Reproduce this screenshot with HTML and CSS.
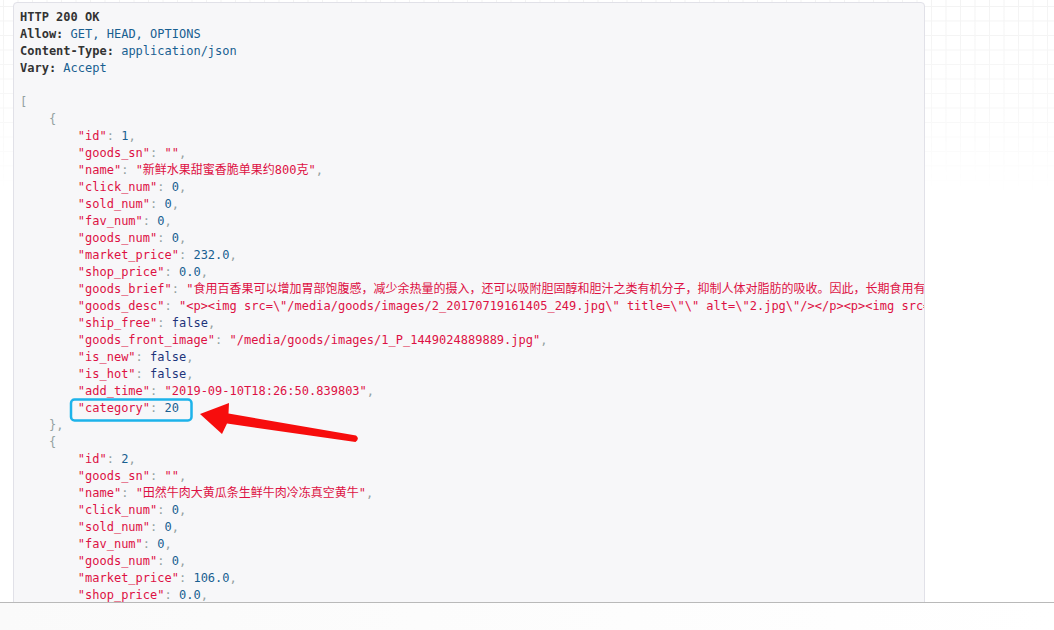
FILE: index.html
```html
<!DOCTYPE html>
<html lang="zh-CN">
<head>
<meta charset="utf-8">
<title>Goods List</title>
<link rel="stylesheet" href="styles.css">
</head>
<body>
<div class="page">
<div class="grid-bg"></div>
<pre class="response"><span class="meta"><b>HTTP 200 OK</b>
<b>Allow:</b> <span class="lit">GET, HEAD, OPTIONS</span>
<b>Content-Type:</b> <span class="lit">application/json</span>
<b>Vary:</b> <span class="lit">Accept</span></span>

<span class="pun">[</span>
    <span class="pun">{</span>
        <span class="str">"id"</span><span class="pun">:</span> <span class="lit">1</span><span class="pun">,</span>
        <span class="str">"goods_sn"</span><span class="pun">:</span> <span class="str">""</span><span class="pun">,</span>
        <span class="str">"name"</span><span class="pun">:</span> <span class="str">"新鲜水果甜蜜香脆单果约800克"</span><span class="pun">,</span>
        <span class="str">"click_num"</span><span class="pun">:</span> <span class="lit">0</span><span class="pun">,</span>
        <span class="str">"sold_num"</span><span class="pun">:</span> <span class="lit">0</span><span class="pun">,</span>
        <span class="str">"fav_num"</span><span class="pun">:</span> <span class="lit">0</span><span class="pun">,</span>
        <span class="str">"goods_num"</span><span class="pun">:</span> <span class="lit">0</span><span class="pun">,</span>
        <span class="str">"market_price"</span><span class="pun">:</span> <span class="lit">232.0</span><span class="pun">,</span>
        <span class="str">"shop_price"</span><span class="pun">:</span> <span class="lit">0.0</span><span class="pun">,</span>
        <span class="str">"goods_brief"</span><span class="pun">:</span> <span class="str">"食用百香果可以增加胃部饱腹感，减少余热量的摄入，还可以吸附胆固醇和胆汁之类有机分子，抑制人体对脂肪的吸收。因此，长期食用有利于改善人体营养吸收结构，降低体内脂肪，塑造健康优美体态。"</span><span class="pun">,</span>
        <span class="str">"goods_desc"</span><span class="pun">:</span> <span class="str">"&lt;p&gt;&lt;img src=\"/media/goods/images/2_20170719161405_249.jpg\" title=\"\" alt=\"2.jpg\"/&gt;&lt;/p&gt;&lt;p&gt;&lt;img src=\"/media/goods/images/2_20170719161414_628.jpg\" title=\"\" alt=\"2.jpg\"/&gt;&lt;/p&gt;"</span><span class="pun">,</span>
        <span class="str">"ship_free"</span><span class="pun">:</span> <span class="kwd">false</span><span class="pun">,</span>
        <span class="str">"goods_front_image"</span><span class="pun">:</span> <span class="str">"/media/goods/images/1_P_1449024889889.jpg"</span><span class="pun">,</span>
        <span class="str">"is_new"</span><span class="pun">:</span> <span class="kwd">false</span><span class="pun">,</span>
        <span class="str">"is_hot"</span><span class="pun">:</span> <span class="kwd">false</span><span class="pun">,</span>
        <span class="str">"add_time"</span><span class="pun">:</span> <span class="str">"2019-09-10T18:26:50.839803"</span><span class="pun">,</span>
        <span class="str">"category"</span><span class="pun">:</span> <span class="lit">20</span>
    <span class="pun">},</span>
    <span class="pun">{</span>
        <span class="str">"id"</span><span class="pun">:</span> <span class="lit">2</span><span class="pun">,</span>
        <span class="str">"goods_sn"</span><span class="pun">:</span> <span class="str">""</span><span class="pun">,</span>
        <span class="str">"name"</span><span class="pun">:</span> <span class="str">"田然牛肉大黄瓜条生鲜牛肉冷冻真空黄牛"</span><span class="pun">,</span>
        <span class="str">"click_num"</span><span class="pun">:</span> <span class="lit">0</span><span class="pun">,</span>
        <span class="str">"sold_num"</span><span class="pun">:</span> <span class="lit">0</span><span class="pun">,</span>
        <span class="str">"fav_num"</span><span class="pun">:</span> <span class="lit">0</span><span class="pun">,</span>
        <span class="str">"goods_num"</span><span class="pun">:</span> <span class="lit">0</span><span class="pun">,</span>
        <span class="str">"market_price"</span><span class="pun">:</span> <span class="lit">106.0</span><span class="pun">,</span>
        <span class="str">"shop_price"</span><span class="pun">:</span> <span class="lit">0.0</span><span class="pun">,</span>
        <span class="str">"goods_brief"</span><span class="pun">:</span> <span class="str">"田然牛肉大黄瓜条生鲜牛肉冷冻真空黄牛"</span><span class="pun">,</span>
</pre>
<svg class="annotation" width="1054" height="602" viewBox="0 0 1054 602" aria-hidden="true">
  <rect x="71" y="399.5" width="120.5" height="21" rx="3.5" ry="3.5" fill="none" stroke="#1db3ea" stroke-width="2.5"/>
  <path d="M200 414 L229 403 L228.5 413.5 L356 435.5 Q360 438.5 355.5 442 L227 423.5 L222 434 Z" fill="#f70d0d"/>
</svg>
</div>
<div class="footer-strip"></div>
</body>
</html>
```
FILE: styles.css
```css
html, body {
  margin: 0;
  padding: 0;
  background: #ffffff;
}

body {
  width: 1054px;
  height: 630px;
  overflow: hidden;
  font-family: "DejaVu Sans Mono", "Noto Sans CJK SC", monospace;
}

.page {
  position: relative;
  height: 602px;
  overflow: hidden;
  padding: 2px 129px 0 13px;
  box-sizing: border-box;
}

.grid-bg {
  position: absolute;
  left: 0;
  top: 0;
  width: 1054px;
  height: 190px;
  background-image:
    linear-gradient(to right, #f3f3f3 1px, transparent 1px),
    linear-gradient(to bottom, #f3f3f3 1px, transparent 1px);
  background-size: 14.5px 14.5px;
  background-position: 3px 6px;
  -webkit-mask-image: linear-gradient(to bottom, rgba(0,0,0,1) 0%, rgba(0,0,0,0.6) 60%, rgba(0,0,0,0) 100%);
  mask-image: linear-gradient(to bottom, rgba(0,0,0,1) 0%, rgba(0,0,0,0.6) 60%, rgba(0,0,0,0) 100%);
}

.response {
  position: relative;
  margin: 0;
  height: 640px;
  box-sizing: border-box;
  padding: 6px 6px 0 6px;
  background: #f7f7f9;
  border: 1px solid #e1e1e8;
  border-radius: 4px;
  font-family: "DejaVu Sans Mono", "Noto Sans CJK SC", monospace;
  font-size: 12px;
  line-height: 17px;
  color: #48484c;
  white-space: pre;
  overflow: hidden;
}

.response b {
  font-weight: bold;
  color: #333333;
}

.str { color: #dd1144; }
.lit { color: #195f91; }
.kwd { color: #1e347b; }
.pun { color: #93a1a1; }

.annotation {
  position: absolute;
  left: 0;
  top: 0;
  pointer-events: none;
}

.footer-strip {
  height: 27px;
  border-top: 1px solid #b9b9b9;
  background: linear-gradient(to right, #fafafa 0%, #fdfdfd 60%, #ffffff 100%);
}
```
